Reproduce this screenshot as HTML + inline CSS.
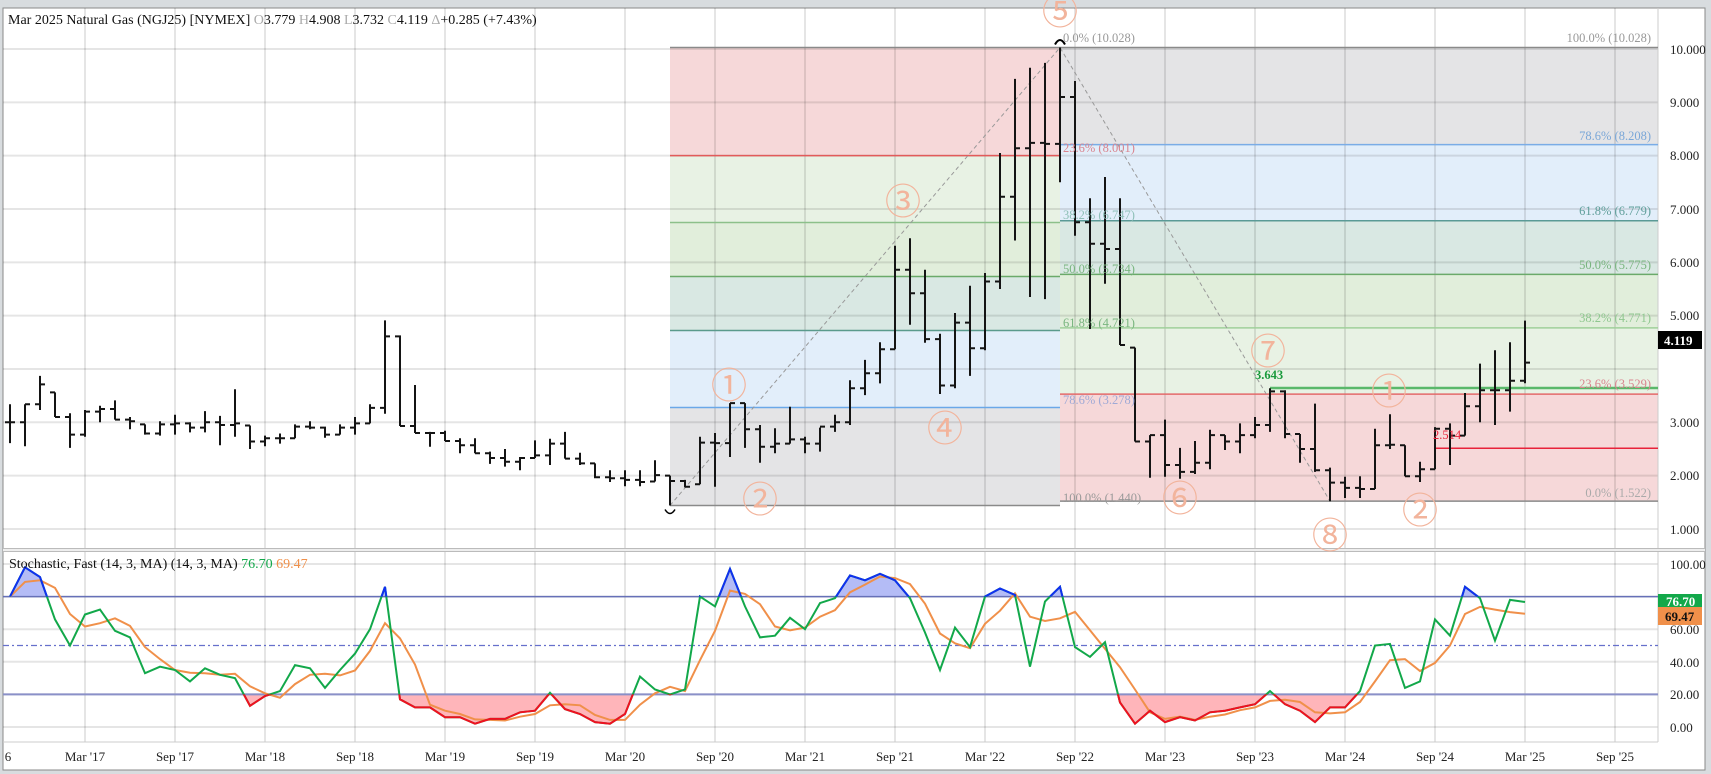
<!DOCTYPE html>
<html><head><meta charset="utf-8">
<style>
html,body{margin:0;padding:0;background:#d8dcdf;}
body{width:1711px;height:774px;overflow:hidden;position:relative;font-family:"Liberation Serif",serif;}
svg{position:absolute;left:0;top:0;}
</style></head>
<body>
<svg id="s" width="1711" height="774" viewBox="0 0 1711 774" xmlns="http://www.w3.org/2000/svg" font-family="Liberation Serif, serif">
<rect x="3" y="8" width="1702" height="762" fill="#fff" stroke="#8a8a8a" stroke-width="1"/>
<g id="bands"></g>
<g id="grid"></g>
<g id="fib"></g>
<g id="bars"></g>
<g id="stoch"></g>
<g id="waves" font-family="Noto Sans CJK JP, DejaVu Sans, sans-serif" fill="#f2b49c" font-size="36" text-anchor="middle">
<text x="1060" y="24">⑤</text>
<text x="729" y="398">①</text>
<text x="760" y="512">②</text>
<text x="903" y="214">③</text>
<text x="945" y="441">④</text>
<text x="1180" y="511">⑥</text>
<text x="1268" y="364">⑦</text>
<text x="1389" y="404">①</text>
<text x="1420" y="523">②</text>
<text x="1330" y="548">⑧</text>
</g>
<g font-size="12.5">
<text x="1063" y="42" fill="#999">0.0% (10.028)</text>
<text x="1063" y="152" fill="#d9848e">23.6% (8.001)</text>
<text x="1063" y="219" fill="#8fc0b8">38.2% (6.747)</text>
<text x="1063" y="273" fill="#79b57f">50.0% (5.734)</text>
<text x="1063" y="327" fill="#79b57f">61.8% (4.721)</text>
<text x="1063" y="404" fill="#9fa9d6">78.6% (3.278)</text>
<text x="1063" y="502" fill="#999">100.0% (1.440)</text>
<g text-anchor="end">
<text x="1651" y="42" fill="#999">100.0% (10.028)</text>
<text x="1651" y="140" fill="#7aa7d8">78.6% (8.208)</text>
<text x="1651" y="215" fill="#5f9e9a">61.8% (6.779)</text>
<text x="1651" y="269" fill="#79b57f">50.0% (5.775)</text>
<text x="1651" y="322" fill="#8fc78f">38.2% (4.771)</text>
<text x="1651" y="388" fill="#d9848e">23.6% (3.529)</text>
<text x="1651" y="497" fill="#aaa">0.0% (1.522)</text>
</g>
<text x="1255" y="379" fill="#1a9a3c" font-weight="bold">3.643</text>
<text x="1433" y="439" fill="#e8223a">2.514</text>
</g>
<g font-size="13" fill="#222">
<text x="1670" y="54">10.000</text><text x="1670" y="107">9.000</text><text x="1670" y="160">8.000</text>
<text x="1670" y="214">7.000</text><text x="1670" y="267">6.000</text><text x="1670" y="320">5.000</text>
<text x="1670" y="427">3.000</text><text x="1670" y="480">2.000</text><text x="1670" y="534">1.000</text>
<text x="1670" y="569">100.00</text><text x="1670" y="634">60.00</text><text x="1670" y="667">40.00</text>
<text x="1670" y="699">20.00</text><text x="1670" y="732">0.00</text>
</g>
<rect x="1658" y="331" width="44" height="18" fill="#000"/>
<text x="1664" y="345" font-size="13" font-weight="bold" fill="#fff">4.119</text>
<rect x="1658" y="594" width="44" height="13" fill="#12a84a"/>
<text x="1666" y="606" font-size="13" font-weight="bold" fill="#fff">76.70</text>
<rect x="1658" y="607" width="44" height="18" fill="#f0904a"/>
<text x="1665" y="621" font-size="13" font-weight="bold" fill="#111">69.47</text>
<g font-size="13" fill="#222" text-anchor="middle" id="xl"></g>
<text x="8" y="24" font-size="14" fill="#111">Mar 2025 Natural Gas (NGJ25) [NYMEX] <tspan fill="#aaa">O</tspan>3.779 <tspan fill="#aaa">H</tspan>4.908 <tspan fill="#aaa">L</tspan>3.732 <tspan fill="#aaa">C</tspan>4.119 <tspan fill="#aaa">Δ</tspan>+0.285 (+7.43%)</text>
<text x="9" y="568" font-size="14" fill="#111">Stochastic, Fast (14, 3, MA)  (14, 3, MA) <tspan fill="#12a84a">76.70</tspan> <tspan fill="#f0904a">69.47</tspan></text>
</svg>
<script>
var NS="http://www.w3.org/2000/svg";
function el(p,t,a){var e=document.createElementNS(NS,t);for(var k in a)e.setAttribute(k,a[k]);document.getElementById(p).appendChild(e);return e;}
function Y(p){return 49+(10-p)*53.33;}
function X(i){return 10+15*i;}
function SY(v){return 727-v*1.63;}
function band(x1,x2,p1,p2,c){el("bands","rect",{x:x1,y:Y(p1),width:x2-x1,height:Y(p2)-Y(p1),fill:c});}
band(670,1060,10.028,8.001,"#f6d8d9");band(670,1060,8.001,6.747,"#e8f2e4");band(670,1060,6.747,5.734,"#e1eedb");
band(670,1060,5.734,4.721,"#d9e8e3");band(670,1060,4.721,3.278,"#e2eefa");band(670,1060,3.278,1.44,"#e4e4e6");
band(1060,1658,10.028,8.208,"#e4e4e6");band(1060,1658,8.208,6.779,"#e2eefa");band(1060,1658,6.779,5.775,"#d9e8e3");
band(1060,1658,5.775,4.771,"#e1eedb");band(1060,1658,4.771,3.529,"#e8f2e4");band(1060,1658,3.529,1.522,"#f6d8d9");
var gx=[-5];for(var k=0;k<18;k++)gx.push(85+90*k);
gx.forEach(function(x){if(x>3&&x<1658){el("grid","line",{x1:x,y1:8,x2:x,y2:548,stroke:"rgba(0,0,0,0.1)","stroke-width":2});el("grid","line",{x1:x,y1:552,x2:x,y2:742,stroke:"rgba(0,0,0,0.1)","stroke-width":2});}});
for(var p=1;p<=10;p++)el("grid","line",{x1:3,y1:Y(p),x2:1658,y2:Y(p),stroke:"rgba(0,0,0,0.1)","stroke-width":2});
[0,20,40,60,80,100].forEach(function(v){el("grid","line",{x1:3,y1:SY(v),x2:1658,y2:SY(v),stroke:"rgba(0,0,0,0.1)","stroke-width":2});});
el("grid","line",{x1:1658,y1:8,x2:1658,y2:742,stroke:"#ccc","stroke-width":1});
el("grid","line",{x1:3,y1:742,x2:1658,y2:742,stroke:"#ccc","stroke-width":1});
el("grid","rect",{x:3,y:548,width:1702,height:4,fill:"#bbb"});
el("grid","rect",{x:3,y:549,width:1702,height:2,fill:"#eee"});
var lab=["Mar '17","Sep '17","Mar '18","Sep '18","Mar '19","Sep '19","Mar '20","Sep '20","Mar '21","Sep '21","Mar '22","Sep '22","Mar '23","Sep '23","Mar '24","Sep '24","Mar '25","Sep '25"];
lab.forEach(function(t,k){var e=el("xl","text",{x:85+90*k,y:761});e.textContent=t;});
var e0=el("xl","text",{x:8,y:761});e0.textContent="6";
function hl(x1,x2,p,c,w){el("fib","line",{x1:x1,y1:Y(p),x2:x2,y2:Y(p),stroke:c,"stroke-width":w||1.5});}
hl(670,1658,10.028,"#8a8a8a");hl(670,1060,8.001,"#e35a5a");hl(670,1060,6.747,"#8cc08a");hl(670,1060,5.734,"#6aaa6a");
hl(670,1060,4.721,"#5a9a8c");hl(670,1060,3.278,"#6aa8e8");hl(670,1060,1.44,"#8a8a8a");
hl(1060,1658,8.208,"#7aace6");hl(1060,1658,6.779,"#5a9a96");hl(1060,1658,5.775,"#6aaa6a");hl(1060,1658,4.771,"#9fd09a");
hl(1060,1658,3.529,"#e36a6a");hl(1060,1658,1.522,"#8a8a8a");
hl(1270,1658,3.643,"#5ab86a",2.5);hl(1435,1658,2.514,"#e8223a",1.5);
el("fib","polyline",{points:"670,"+Y(1.44)+" 1060,"+Y(10.028)+" 1330,"+Y(1.522),fill:"none",stroke:"#999","stroke-width":1,"stroke-dasharray":"4,3"});
el("fib","path",{d:"M665,"+(Y(1.44)+4)+" q5,8 10,0",fill:"none",stroke:"#000","stroke-width":1.5});
el("fib","path",{d:"M1055,"+(Y(10.028)-3)+" q5,-9 10,0",fill:"none",stroke:"#000","stroke-width":2});
var B=[[3.34,2.61,3.0],[3.34,2.55,3.34],[3.87,3.23,3.71],[3.56,3.1,3.1],[3.17,2.52,2.77],[3.23,2.73,3.2],[3.31,3.0,3.25],[3.41,3.05,3.05],[3.1,2.87,3.02],[2.96,2.77,2.79],
[3.02,2.75,2.96],[3.14,2.77,2.98],[3.0,2.81,2.9],[3.21,2.81,3.0],[3.12,2.57,2.95],[3.62,2.73,2.98],[2.94,2.5,2.64],[2.75,2.55,2.7],[2.79,2.6,2.7],[2.96,2.7,2.92],
[3.02,2.87,2.9],[2.92,2.71,2.77],[2.96,2.77,2.9],[3.1,2.77,2.98],[3.34,2.98,3.27],[4.91,3.16,4.61],[4.63,2.93,2.93],[3.7,2.8,2.8],[2.82,2.54,2.8],[2.84,2.65,2.65],
[2.7,2.42,2.57],[2.7,2.42,2.42],[2.45,2.22,2.33],[2.5,2.17,2.26],[2.35,2.1,2.33],[2.66,2.33,2.38],[2.69,2.2,2.6],[2.82,2.32,2.32],[2.43,2.2,2.23],[2.23,1.95,1.97],
[2.1,1.88,1.95],[2.1,1.8,1.92],[2.1,1.8,1.88],[2.29,1.89,2.01],[2.0,1.44,1.9],[1.92,1.78,1.79],[2.73,1.84,2.62],[2.8,1.79,2.61],[3.36,2.35,3.36],[3.36,2.52,2.87],
[2.95,2.24,2.54],[2.89,2.42,2.6],[3.29,2.6,2.68],[2.73,2.42,2.6],[2.9,2.45,2.92],[3.14,2.82,3.0],[3.79,2.95,3.64],[4.17,3.51,3.92],[4.5,3.73,4.37],[6.31,4.37,5.86],
[6.45,4.83,5.42],[5.86,4.49,4.56],[4.66,3.53,3.69],[5.05,3.64,4.87],[5.56,3.87,4.39],[5.8,4.35,5.64],[8.05,5.5,7.23],[9.44,6.41,8.14],[9.65,5.35,8.24],[9.74,5.31,8.22],
[10.028,7.5,9.1],[9.4,6.5,6.75],[7.2,4.75,6.35],[7.6,5.6,6.25],[7.2,4.45,4.45],[4.4,2.64,2.64],[2.76,1.96,2.76],[3.05,1.98,2.2],[2.52,1.94,2.07],[2.65,2.03,2.24],
[2.86,2.12,2.76],[2.76,2.48,2.64],[2.98,2.42,2.76],[3.1,2.7,2.95],[3.64,2.82,3.58],[3.6,2.7,2.78],[2.78,2.24,2.5],[3.35,2.07,2.1],[2.15,1.52,1.87],[1.98,1.58,1.77],
[1.99,1.58,1.75],[2.88,1.75,2.57],[3.15,2.5,2.58],[2.57,1.99,1.99],[2.26,1.88,2.12],[2.91,2.12,2.88],[2.98,2.2,2.75],[3.55,2.75,3.3],[4.1,3.0,3.6],[4.35,2.95,3.6],
[4.5,3.2,3.78],[4.908,3.732,4.119]];
var d="";
B.forEach(function(b,i){var x=X(i),o=i?B[i-1][2]:b[2];o=Math.min(b[0],Math.max(b[1],o));
d+="M"+x+","+Y(b[0]).toFixed(1)+"V"+Y(b[1]).toFixed(1)+"M"+(x-5)+","+Y(o).toFixed(1)+"H"+x+"M"+x+","+Y(b[2]).toFixed(1)+"H"+(x+5);});
el("bars","path",{d:d,stroke:"#141414","stroke-width":2,fill:"none"});
var K=[80,98,92,66,50,69,72,59,55,33,37,35,28,36,32,30,13,19,22,38,36,24,35,45,60,86,17,12,12,6,6,2,5,5,9,10,21,11,8,3,2,8,31,23,20,23,80,74,97,74,55,56,67,60,76,79,93,90,94,90,79,58,35,61,49,80,85,81,37,77,86,49,43,52,15,2,10,3,6,4,9,10,12,14,22,14,10,3,12,12,22,50,51,24,28,66,56,86,79,53,78,76.7];
var D=K.map(function(v,i){var a=K.slice(Math.max(0,i-2),i+1);var s=0;a.forEach(function(q){s+=q});return s/a.length;});
D[D.length-1]=69.47;D[D.length-2]=70.5;D[D.length-3]=72;
var pts=K.map(function(v,i){return X(i)+","+SY(v).toFixed(1)}).join(" ");
var defs=el("stoch","defs",{});
var c1=document.createElementNS(NS,"clipPath");c1.setAttribute("id","ca");defs.appendChild(c1);
var r1=document.createElementNS(NS,"rect");r1.setAttribute("x",0);r1.setAttribute("y",550);r1.setAttribute("width",1711);r1.setAttribute("height",SY(80)-550);c1.appendChild(r1);
var c2=document.createElementNS(NS,"clipPath");c2.setAttribute("id","cb");defs.appendChild(c2);
var r2=document.createElementNS(NS,"rect");r2.setAttribute("x",0);r2.setAttribute("y",SY(20));r2.setAttribute("width",1711);r2.setAttribute("height",60);c2.appendChild(r2);
el("stoch","line",{x1:3,y1:SY(50),x2:1658,y2:SY(50),stroke:"#6670cc","stroke-width":1.2,"stroke-dasharray":"6,3,2,3"});
el("stoch","polygon",{points:X(0)+","+SY(80)+" "+pts+" "+X(101)+","+SY(80),fill:"#b4bcf6","clip-path":"url(#ca)"});
el("stoch","polygon",{points:X(0)+","+SY(20)+" "+pts+" "+X(101)+","+SY(20),fill:"#ffb5ba","clip-path":"url(#cb)"});
el("stoch","line",{x1:3,y1:SY(80),x2:1658,y2:SY(80),stroke:"#6670b8","stroke-width":1.5});
el("stoch","line",{x1:3,y1:SY(20),x2:1658,y2:SY(20),stroke:"#8a90c8","stroke-width":2});
el("stoch","polyline",{points:D.map(function(v,i){return X(i)+","+SY(v).toFixed(1)}).join(" "),fill:"none",stroke:"#f0904a","stroke-width":2});
el("stoch","polyline",{points:pts,fill:"none",stroke:"#12a84a","stroke-width":2});
el("stoch","polyline",{points:pts,fill:"none",stroke:"#1030f0","stroke-width":2,"clip-path":"url(#ca)"});
el("stoch","polyline",{points:pts,fill:"none",stroke:"#f01020","stroke-width":2,"clip-path":"url(#cb)"});
</script>
</body></html>
